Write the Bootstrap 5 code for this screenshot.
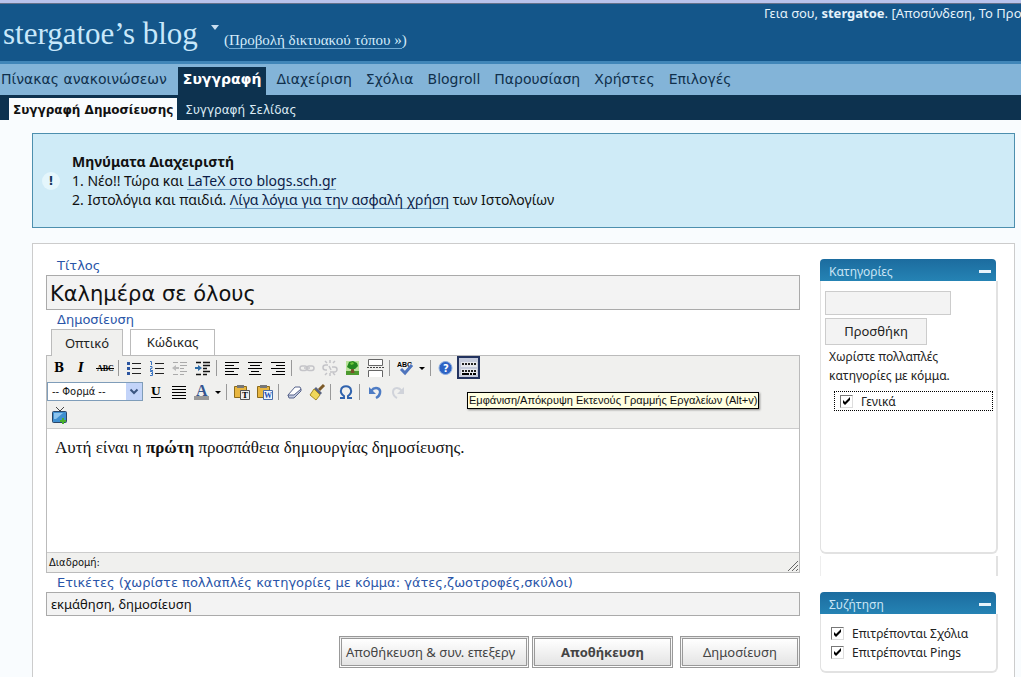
<!DOCTYPE html>
<html lang="el">
<head>
<meta charset="utf-8">
<meta name="viewport" content="width=device-width, initial-scale=1">
<title>stergatoe’s blog</title>
<link href="https://cdn.jsdelivr.net/npm/bootstrap@5.3.0/dist/css/bootstrap.min.css" rel="stylesheet">
<style>
body{background:#fff;color:#111;font:13px/19px "Noto Sans",sans-serif}
a{color:inherit;text-decoration:none}
.page-wrap{margin-right:2px;background:#f9fcfe;border-top:3px solid #b9c3ec}
.masthead{background:#14568a;height:61px;border-top:1px solid #66718a;border-bottom:3px solid #4186b8;color:#c3def1}
.blog-name{font:31px/38px "Liberation Serif",serif;margin:11px 0 0 3px;color:#c8e8fb}
.caret-down{width:8px;height:5px;margin:21px 0 0 13px}
.visit{font:15px/18px "Liberation Serif",serif;margin:27px 0 0 5px;color:#d5ecfa}
.visit a{border-bottom:1px solid #6fa9d2}
.greeting{font:13px/18px "Noto Sans",sans-serif;width:257px;color:#e4f2fb}
.main-menu{background:#83b4d8;height:31px;font:14px/30px "DejaVu Sans",sans-serif;color:#10304c}
.main-menu a{padding:0 7px}
.main-menu a:first-child{padding-left:1px}
.main-menu a.active{background:#0d324f;color:#fff;font-weight:bold;padding:0 5px;margin:3px 3px 0 4px;line-height:24px}
.sub-menu{background:#0d324f;height:25px;font:12px/24px "DejaVu Sans",sans-serif;color:#dcebf5;padding-left:9px}
.sub-menu a{padding:3px 8px 0}
.sub-menu a.active{background:#f9fcfe;color:#111;font-weight:bold;padding:1px 4px 0;margin-top:3px;height:22px;line-height:22px}
.main-menu a,.sub-menu a{white-space:nowrap}
.notice{margin:13px 6px 0 32px;border:1px solid #4d8fae;background:#cfebf7;padding:18px 15px 18px 9px;font-size:14px}
.notice a{border-bottom:1px solid #6f9fc4;color:#0b1c48}
.notice a,.notice span{line-height:16px;display:inline-block}
.bang{width:18px;height:18px;border-radius:50%;background:#e4f6fc;font:bold 12px/18px "DejaVu Sans",sans-serif;color:#14375c}
.panel{margin:15px 6px 0 32px;border:1px solid #ccc;background:#fff;padding:12px 16px 14px 13px;column-gap:20px}
.field-label{display:block;font:13px/19px "DejaVu Sans",sans-serif;color:#2a55a8;padding-left:11px}
.field{display:block;width:100%;border:1px solid #aaa;background:#f3f3f3;padding:0 4px;color:#111}
.title-field{height:35px;font:21px/33px "DejaVu Sans",sans-serif;padding:2px 3px 0}
.tag-field{height:24px}
.edit-tabs{padding-left:5px;gap:7px;height:26px}
.edit-tabs button{border:1px solid #bbb;border-bottom:0;background:#fff;height:26px;width:85px;font-size:13px;padding:0;color:#222}
.edit-tabs button.active{background:#f0f0ee;height:27px;width:72px;z-index:1;position:relative}
.editor{border:1px solid #bbb}
.tools{background:#f0f0ee;border-bottom:1px solid #ccc;padding-bottom:1px}
.tool-row{height:23px}
.tool-row+.tool-row{margin-top:1px}
.tool{width:23px;height:23px;padding:0;border:0;background:none;flex:none;display:flex;align-items:center;justify-content:center}
.tool svg{width:18px;height:18px}
.tool.on{border:2px solid #23335f;background:#c5cbdc}
.drop{width:12px}
.divide{width:1px;height:16px;background:#999;margin:0 3px 0 2px}
.format-pick{width:96px;height:19px;border:1px solid #7f9db9;background:#fff;font:11px/17px "DejaVu Sans Condensed",sans-serif;appearance:none;padding:0 4px;color:#111}
.pick-arrow{position:absolute;right:1px;top:1px;width:16px;height:17px;background:#c3d4f9;pointer-events:none}
.tip{position:absolute;left:420px;top:36px;border:1px solid #000;box-shadow:1px 1px 2px #888;background:#ffffe1;font:11px/15px "Liberation Sans",sans-serif;white-space:nowrap;padding:0 1px;z-index:2}
.writing{height:123px;padding:8px;font:17px/22px "Liberation Serif",serif}
.path-bar{background:#f0f0ee;border-top:1px solid #ccc;height:20px;font:11px/18px "DejaVu Sans Condensed",sans-serif;padding:0 0 0 2px}
.actions{margin-top:20px;column-gap:3px}
.action{height:32px;border:3px double #999;background:linear-gradient(#fff,#e4e4e4);color:#444;padding:0 4px;white-space:nowrap;font-size:13px}
.side{width:178px;flex:none;padding-top:3px;font-size:12px;color:#222}
.box-head{background:linear-gradient(#1c6c9f,#2583b4);color:#c9e5f5;height:22px;padding:2px 5px 0 9px;border-radius:4px 4px 0 0;margin-right:2px}
.dash{width:12px;height:3px;background:#e8f4fb}
.box-body{border:1px solid #e2e2e2;border-width:0 2px 2px 1px;border-radius:0 0 6px 6px}
.cats{height:273px;padding:10px 3px 0 4px}
.cat-field{width:126px;height:24px;border:1px solid #ccc;background:#f3f3f3}
.add-btn{width:102px;height:27px;border:1px solid #ccc;background:#f3f3f3;font-size:13px;margin-top:3px;padding:0;color:#222}
.hint{padding:2px 0 0 4px}
.cat-item{border:1px dotted #000;height:20px;margin:6px 0 0 9px;padding-left:5px}
.stub{height:20px;border-right:2px solid #e2e2e2;border-left:1px solid #eee;margin:2px 0 16px}
.talk{padding:10px 0 9px 10px}
.tick{appearance:none;width:13px;height:13px;margin:0;border:1px solid #777;border-right-color:#ddd;border-bottom-color:#ddd;background:#fff url("data:image/svg+xml,%3Csvg xmlns='http://www.w3.org/2000/svg' viewBox='0 0 11 11'%3E%3Cpath d='M2 4v3l2 2 5-5V1L4 6z'/%3E%3C/svg%3E");flex:none}
.tick:not(:checked){background:#fff}
</style>
</head>
<body>
<div class="page-wrap overflow-hidden">
<header class="masthead d-flex align-items-start text-nowrap">
  <h1 class="blog-name">stergatoe’s blog</h1>
  <svg class="caret-down" viewBox="0 0 8 5"><path fill="#c8def0" d="M0 0h8L4 5z"/></svg>
  <div class="visit">(<a href="#">Προβολή δικτυακού τόπου »</a>)</div>
  <div class="greeting ms-auto overflow-hidden">Γεια σου, <b>stergatoe</b>. [<a href="#">Αποσύνδεση</a>, <a href="#">Το Προς</a></div>
</header>
<nav class="main-menu d-flex">
  <a href="#">Πίνακας ανακοινώσεων</a><a href="#" class="active">Συγγραφή</a><a href="#">Διαχείριση</a><a href="#">Σχόλια</a><a href="#">Blogroll</a><a href="#">Παρουσίαση</a><a href="#">Χρήστες</a><a href="#">Επιλογές</a>
</nav>
<nav class="sub-menu d-flex"><a href="#" class="active">Συγγραφή Δημοσίευσης</a><a href="#">Συγγραφή Σελίδας</a></nav>

<section class="notice d-flex align-items-center gap-2">
  <div class="bang text-center">!</div>
  <div class="ps-1"><b>Μηνύματα Διαχειριστή</b><br>1. Νέο!! Τώρα και <a href="#">LaTeX στο blogs.sch.gr</a><br>2. Ιστολόγια και παιδιά. <a href="#">Λίγα λόγια για την ασφαλή χρήση</a> των Ιστολογίων</div>
</section>

<main class="panel d-flex align-items-start">
<form class="flex-grow-1">
  <label class="field-label" for="title">Τίτλος</label>
  <input class="field title-field" id="title" value="Καλημέρα σε όλους">
  <span class="field-label" id="post-label">Δημοσίευση</span>
  <div class="edit-tabs d-flex"><button type="button" class="active">Οπτικό</button><button type="button">Κώδικας</button></div>
  <div class="editor">
    <div class="tools position-relative">
      <div class="tool-row d-flex align-items-center">
        <button type="button" class="tool" aria-label="Έντονα"><svg viewBox="0 0 18 18"><text x="4" y="13" font-family="DejaVu Serif" font-weight="bold" font-size="12">B</text></svg></button>
        <button type="button" class="tool" aria-label="Πλάγια"><svg viewBox="0 0 18 18"><text x="5" y="13" font-family="DejaVu Serif" font-weight="bold" font-style="italic" font-size="12">I</text></svg></button>
        <button type="button" class="tool" aria-label="Διαγραφή"><svg viewBox="0 0 18 18"><text x="1" y="12" font-family="Liberation Serif" font-weight="bold" font-size="8">ABC</text><path stroke="#000" d="M0 9.5h18"/></svg></button>
        <span class="divide"></span>
        <button type="button" class="tool" aria-label="Κουκκίδες"><svg viewBox="0 0 18 18"><path stroke="#222" d="M7 4.500h9M7 9.500h9M7 14.500h9"/><path fill="#2b55a0" d="M2 3h3v3H2zM2 8h3v3H2zM2 13h3v3H2z"/></svg></button>
        <button type="button" class="tool" aria-label="Αρίθμηση"><svg viewBox="0 0 18 18"><path stroke="#222" d="M7 4.500h9M7 9.500h9M7 14.500h9"/><path stroke="#3a73c0" fill="none" d="M2 2.500h1.500V6M2 7.500h2v2H2.500v2H5M2 12.500h2.500v4H2M3 14.500h1"/></svg></button>
        <button type="button" class="tool" aria-label="Μείωση εσοχής"><svg viewBox="0 0 18 18"><path stroke="#aaa" d="M2 3.500h5M9 3.500h7M9 6.500h7M9 9.500h4M9 12.500h7M2 15.500h5M9 15.500h4"/><path fill="#bbb" d="M1 9l4-3v2h3v2H5v2z"/></svg></button>
        <button type="button" class="tool" aria-label="Αύξηση εσοχής"><svg viewBox="0 0 18 18"><path stroke="#111" stroke-width="1.500" d="M2 3.500h5M9 3.500h7M9 6.500h7M9 9.500h4M9 12.500h7M2 15.500h5M9 15.500h4"/><path fill="#2e6da8" d="M8 9L4 6v2H1v2h3v2z"/></svg></button>
        <span class="divide"></span>
        <button type="button" class="tool" aria-label="Αριστερά"><svg viewBox="0 0 18 18"><path stroke="#000" d="M2 3.500h14M2 6.500h9M2 9.500h14M2 12.500h9M2 15.500h13"/></svg></button>
        <button type="button" class="tool" aria-label="Κέντρο"><svg viewBox="0 0 18 18"><path stroke="#000" d="M2 3.500h14M4 6.500h10M2 9.500h14M5 12.500h8M3 15.500h12"/></svg></button>
        <button type="button" class="tool" aria-label="Δεξιά"><svg viewBox="0 0 18 18"><path stroke="#000" d="M2 3.500h14M7 6.500h9M2 9.500h14M7 12.500h9M3 15.500h13"/></svg></button>
        <span class="divide"></span>
        <button type="button" class="tool" aria-label="Σύνδεσμος"><svg viewBox="0 0 18 18" fill="none" stroke="#c4c4c8" stroke-width="1.500"><rect x="2" y="7" width="7" height="4.500" rx="2.200"/><rect x="9" y="7" width="7" height="4.500" rx="2.200"/><path d="M6 9h6"/></svg></button>
        <button type="button" class="tool" aria-label="Αφαίρεση συνδέσμου"><svg viewBox="0 0 18 18" fill="none" stroke="#c4c4c8" stroke-width="1.500"><path d="M7 6H4.500a2.500 2.500 0 0 0 0 5H6M11 8h2.500a2.500 2.500 0 0 1 0 5H9M9 1v3M4 2l2 2M14 2l-2 2M9 14v3M4 16l2-2M14 16l-2-2M8 7l2 4"/></svg></button>
        <button type="button" class="tool" aria-label="Εικόνα"><svg viewBox="0 0 18 18"><path fill="#b9e39a" d="M2 2h13v10H2z"/><path fill="#4d9a2f" d="M2 12h13v4H2z"/><path fill="#79502a" d="M7.500 8h2l1 6h-4z"/><path fill="#23871f" d="M5 3l4-1 4 2 1 3-3 3H6L3 8z"/><path fill="#6cc437" d="M6 4l3-1 1 2-3 1z"/></svg></button>
        <button type="button" class="tool" aria-label="Περισσότερα"><svg viewBox="0 0 18 18" overflow="visible"><path fill="#fff" stroke="#666" d="M1.500 .5h14v6h-14zM1.500 18v-6.500h14V18"/><path stroke="#444" stroke-dasharray="2 1" d="M0 8.500h18"/></svg></button>
        <span class="divide"></span>
        <button type="button" class="tool" aria-label="Ορθογραφία"><svg viewBox="0 0 18 18"><text x="1" y="8" font-family="Liberation Sans" font-weight="bold" font-size="7">ABC</text><path fill="none" stroke="#4f75bd" stroke-width="3" d="M5 10l4 4 7-8"/></svg></button>
        <button type="button" class="tool drop" aria-label="Γλώσσα"><svg viewBox="0 0 12 12"><path d="M3 5h6l-3 3z"/></svg></button>
        <span class="divide"></span>
        <button type="button" class="tool" aria-label="Βοήθεια"><svg viewBox="0 0 18 18"><circle cx="8.500" cy="9" r="6.500" fill="#2c62c4" stroke="#8aabdf"/><text x="6" y="13" fill="#fff" font-family="DejaVu Sans" font-weight="bold" font-size="10">?</text></svg></button>
        <button type="button" class="tool on" aria-label="Εκτενής γραμμή"><svg viewBox="0 0 18 18"><path fill="#e6e8ee" d="M1 3h16v5H1zM1 10h16v6H1z"/><path stroke="#222" stroke-width="2" stroke-dasharray="2 1" d="M2 5h14M2 12h14"/><path stroke="#000" stroke-width="2" d="M2 15h7M10 15h2M13 15h3"/></svg></button>
      </div>
      <div class="tool-row d-flex align-items-center">
        <div class="position-relative ms-0"><select class="format-pick d-block" aria-label="Φορμά"><option>-- Φορμά --</option></select><svg class="pick-arrow" viewBox="0 0 16 17"><path fill="none" stroke="#3b5580" stroke-width="2" d="M4.500 6.500L8 10l3.500-3.500"/></svg></div>
        <button type="button" class="tool" aria-label="Υπογράμμιση"><svg viewBox="0 0 18 18"><text x="5" y="12" font-family="DejaVu Serif" font-weight="bold" font-size="11">U</text><path stroke="#000" d="M5 14.500h10"/></svg></button>
        <button type="button" class="tool" aria-label="Πλήρης στοίχιση"><svg viewBox="0 0 18 18"><path stroke="#000" d="M3 3.500h14M3 6.500h14M3 9.500h14M3 12.500h14M3 15.500h14"/></svg></button>
        <button type="button" class="tool" aria-label="Χρώμα"><svg viewBox="0 0 18 18"><path fill="#999" d="M2 13h15v4H2z"/><text x="4" y="13" fill="#35558f" font-family="Liberation Serif" font-weight="bold" font-size="16">A</text></svg></button>
        <button type="button" class="tool drop" aria-label="Χρώματα"><svg viewBox="0 0 12 12"><path d="M3 5h6l-3 3z"/></svg></button>
        <span class="divide"></span>
        <button type="button" class="tool" aria-label="Επικόλληση κειμένου"><svg viewBox="0 0 18 18"><path fill="#e8b640" stroke="#8c6b1c" d="M1.500 3.500h12v11h-12z"/><path fill="#777" d="M4 2h7v3H4z"/><path fill="#eee" stroke="#555" d="M7.500 7.500h9v9h-9z"/><text x="9" y="15" font-family="Liberation Serif" font-weight="bold" font-size="9">T</text></svg></button>
        <button type="button" class="tool" aria-label="Επικόλληση Word"><svg viewBox="0 0 18 18"><path fill="#e8b640" stroke="#8c6b1c" d="M1.500 3.500h12v11h-12z"/><path fill="#777" d="M4 2h7v3H4z"/><path fill="#eef4ff" stroke="#4a6da8" d="M7.500 7.500h9v9h-9z"/><text x="8" y="15" fill="#1c50b0" font-family="Liberation Serif" font-weight="bold" font-size="8">W</text></svg></button>
        <span class="divide"></span>
        <button type="button" class="tool" aria-label="Γόμα"><svg viewBox="0 0 18 18"><path fill="#fff" stroke="#58658c" d="M3 12l7-8h5l1 2-7 8H4z"/><path fill="#c3cbe0" stroke="#58658c" d="M3 12h6l7-6v2l-7 7H4z"/></svg></button>
        <button type="button" class="tool" aria-label="Καθαρισμός"><svg viewBox="0 0 18 18"><path stroke="#7c5a28" stroke-width="3" d="M16 2l-5 5"/><path fill="#5b6580" d="M8 4l6 6-2 2-6-6z"/><path fill="#efd75a" stroke="#a58b25" d="M6 6l6 6-4 5-6-5z"/></svg></button>
        <span class="divide"></span>
        <button type="button" class="tool" aria-label="Σύμβολο"><svg viewBox="0 0 18 18"><path fill="none" stroke="#2f62ad" stroke-width="2" d="M3 15h4v-2C4 11 3.500 9 4 7c1-5 9-5 10 0 .5 2 0 4-3 6v2h4"/></svg></button>
        <span class="divide"></span>
        <button type="button" class="tool" aria-label="Αναίρεση"><svg viewBox="0 0 18 18"><path fill="none" stroke="#4e7cc4" stroke-width="2.500" d="M5 8c4-5 10-3 9 2-.5 3-2 4-4 5"/><path fill="#4e7cc4" d="M3 4v7h7z"/></svg></button>
        <button type="button" class="tool" aria-label="Επανάληψη"><svg viewBox="0 0 18 18"><path fill="none" stroke="#d0d3da" stroke-width="2" d="M13 8C9 3 4 5 4 9c0 3 2 5 4 6"/><path fill="#d0d3da" d="M15 4v7H8z"/></svg></button>
      </div>
      <div class="tool-row d-flex align-items-center">
        <button type="button" class="tool" aria-label="Βίντεο"><svg viewBox="0 0 18 18"><path fill="none" stroke="#444" d="M6 0l4 4 4-4"/><rect x="2.500" y="4.500" width="14" height="11" rx="1" fill="#3f8fd0" stroke="#2a4668"/><path fill="#8cc4ee" d="M4 6h9l-7 6H4z"/><path fill="#49b02c" d="M12 11h2v2h2v2h-2v2h-2v-2h-2v-2h2z"/></svg></button>
      </div>
      <div class="tip" role="tooltip">Εμφάνιση/Απόκρυψη Εκτενούς Γραμμής Εργαλείων (Alt+v)</div>
    </div>
    <div class="writing" contenteditable="true" role="textbox" aria-labelledby="post-label">Αυτή είναι η <b>πρώτη</b> προσπάθεια δημιουργίας δημοσίευσης.</div>
    <div class="path-bar d-flex justify-content-between align-items-end"><span>Διαδρομή:</span><svg width="12" height="12" viewBox="0 0 12 12"><path stroke="#666" d="M1 11L11 1M5 11l6-6M9 11l2-2"/></svg></div>
  </div>
  <label class="field-label" for="tags">Ετικέτες (χωρίστε πολλαπλές κατηγορίες με κόμμα: γάτες,ζωοτροφές,σκύλοι)</label>
  <input class="field tag-field" id="tags" value="εκμάθηση, δημοσίευση">
  <div class="actions d-flex justify-content-end">
    <button type="button" class="action text-start" style="width:190px">Αποθήκευση &amp; συν. επεξεργ</button>
    <button type="button" class="action fw-bold" style="width:141px">Αποθήκευση</button>
    <button type="button" class="action ms-1" style="width:120px">Δημοσίευση</button>
  </div>
</form>
<aside class="side">
  <div class="box-head d-flex align-items-center justify-content-between">Κατηγορίες<span class="dash"></span></div>
  <div class="box-body cats">
    <input class="cat-field d-block" aria-label="Νέα κατηγορία">
    <button type="button" class="add-btn d-block">Προσθήκη</button>
    <div class="hint">Χωρίστε πολλαπλές<br>κατηγορίες με κόμμα.</div>
    <label class="cat-item d-flex align-items-center gap-2"><input type="checkbox" class="tick" checked>Γενικά</label>
  </div>
  <div class="stub"></div>
  <div class="box-head d-flex align-items-center justify-content-between">Συζήτηση<span class="dash"></span></div>
  <div class="box-body talk">
    <label class="d-flex align-items-center gap-1"><input type="checkbox" class="tick me-1" checked>Επιτρέπονται Σχόλια</label>
    <label class="d-flex align-items-center gap-1"><input type="checkbox" class="tick me-1" checked>Επιτρέπονται Pings</label>
  </div>
</aside>
</main>
</div>
<script src="https://cdn.jsdelivr.net/npm/bootstrap@5.3.0/dist/js/bootstrap.bundle.min.js"></script>
</body>
</html>
